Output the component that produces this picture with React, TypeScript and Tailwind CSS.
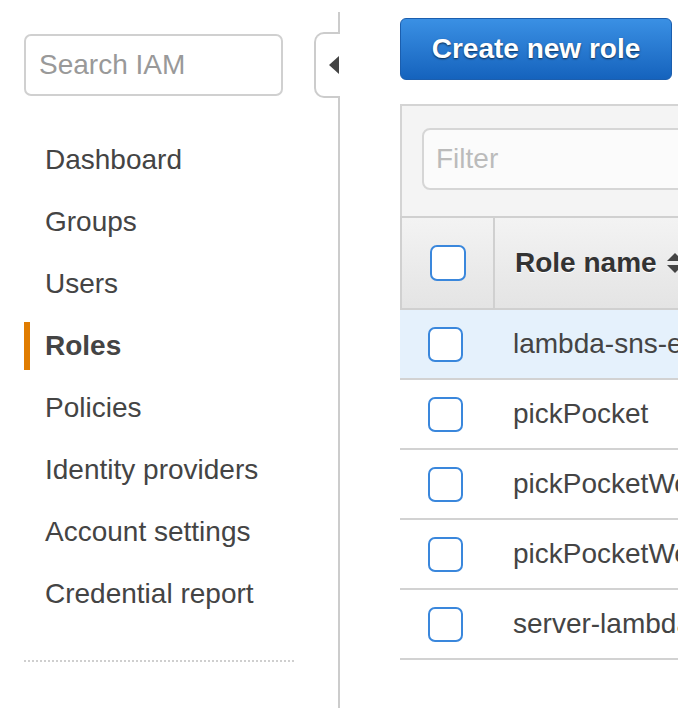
import React from "react";

const navItems = [
  "Dashboard",
  "Groups",
  "Users",
  "Roles",
  "Policies",
  "Identity providers",
  "Account settings",
  "Credential report",
];

const rows = [
  "lambda-sns-execution-role",
  "pickPocket",
  "pickPocketWorker",
  "pickPocketWeb",
  "server-lambda-role",
];

function Checkbox({ className = "" }: { className?: string }) {
  return (
    <div
      className={
        "w-[35px] h-[35px] rounded-[7px] border-2 border-[#3a87dc] bg-white shrink-0 " +
        className
      }
    />
  );
}

export default function App() {
  return (
    <div
      className="w-[678px] h-[708px] flex overflow-hidden bg-white text-[#444]"
      style={{ fontFamily: '"Liberation Sans", Arial, Helvetica, sans-serif' }}
    >
      {/* Sidebar */}
      <div className="w-[314px] shrink-0 flex flex-col">
        <div className="mt-[34px] ml-[24px] w-[259px] h-[62px] rounded-[7px] border-2 border-[#d0d0d0] flex items-center px-[13px]">
          <span className="text-[28px] text-[#999]">Search IAM</span>
        </div>
        <nav className="mt-[33px] flex flex-col">
          {navItems.map((item) => {
            const active = item === "Roles";
            return (
              <div key={item} className="h-[62px] pl-[24px] flex items-center">
                <div
                  className={
                    "w-[6px] h-[48px] shrink-0 " +
                    (active ? "bg-[#e07c00]" : "bg-transparent")
                  }
                />
                <span
                  className={
                    "ml-[15px] text-[28px] leading-none " +
                    (active ? "font-bold text-[#444]" : "text-[#444]")
                  }
                >
                  {item}
                </span>
              </div>
            );
          })}
        </nav>
        <div className="mt-[35px] ml-[24px] w-[270px] border-t-2 border-dotted border-[#cfcfcf]" />
      </div>

      {/* Collapse tab column */}
      <div className="w-[26px] shrink-0 flex flex-col">
        <div className="mt-[12px] h-[20px] border-r-2 border-[#cccccc]" />
        <div className="h-[66px] border-2 border-r-0 border-[#cccccc] rounded-l-[10px] flex items-center justify-end pr-[1px]">
          <svg width="10" height="18" viewBox="0 0 10 18">
            <polygon points="10,0 10,18 0,9" fill="#444" />
          </svg>
        </div>
        <div className="flex-1 border-r-2 border-[#cccccc]" />
      </div>

      {/* Main */}
      <div className="flex-1 flex flex-col pl-[60px]">
        <button className="mt-[18px] w-[272px] h-[62px] rounded-[6px] border border-[#1b5eae] bg-gradient-to-b from-[#3a90e4] to-[#1563bd] text-white font-bold text-[28px] [text-shadow:0_1px_2px_rgba(0,0,0,0.65)] flex items-center justify-center">
          Create new role
        </button>

        <div className="mt-[24px] w-[600px] shrink-0 flex flex-col">
          {/* Filter area */}
          <div className="h-[112px] bg-[#f4f4f4] border-t-2 border-l-2 border-[#d4d4d4] flex items-start">
            <div className="mt-[22px] ml-[20px] w-[500px] h-[62px] rounded-[8px] border-2 border-[#d6d6d6] bg-[#fbfbfb] flex items-center px-[12px]">
              <span className="text-[28px] text-[#bbbbbb]">Filter</span>
            </div>
          </div>

          {/* Header */}
          <div className="h-[94px] flex border-t-2 border-b-2 border-l-2 border-[#d0d0d0] bg-gradient-to-b from-[#f3f3f3] to-[#e4e4e4]">
            <div className="w-[93px] shrink-0 flex items-center border-r-2 border-[#d0d0d0] pl-[28px]">
              <Checkbox className="w-[36px] h-[36px]" />
            </div>
            <div className="flex-1 flex items-center pl-[20px]">
              <span className="text-[28px] font-bold text-[#333] [text-shadow:0_1px_0_#fff]">
                Role name
              </span>
              <svg
                className="ml-[10px]"
                width="16"
                height="24"
                viewBox="0 0 16 24"
              >
                <polygon points="8,2 16,10 0,10" fill="#444" />
                <polygon points="0,14 16,14 8,22" fill="#444" />
              </svg>
            </div>
          </div>

          {/* Rows */}
          {rows.map((name, i) => (
            <div
              key={name}
              className={
                "h-[70px] flex items-center border-b-2 border-[#d2d2d2] " +
                (i === 0 ? "bg-[#e5f1fc]" : "bg-white")
              }
            >
              <div className="w-[95px] shrink-0 pl-[28px] flex items-center">
                <Checkbox />
              </div>
              <span className="ml-[18px] text-[28px] text-[#444] whitespace-nowrap">
                {name}
              </span>
            </div>
          ))}
        </div>
      </div>
    </div>
  );
}
